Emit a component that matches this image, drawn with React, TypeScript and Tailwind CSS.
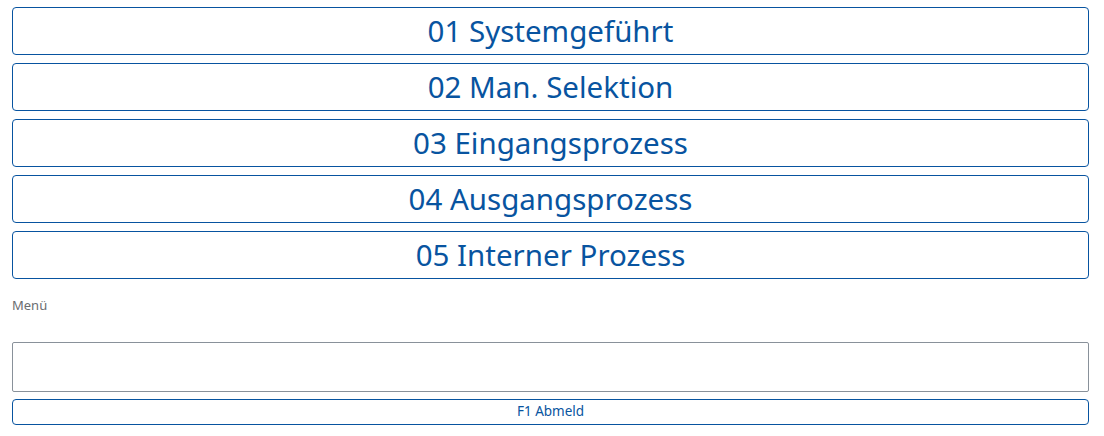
const items = [
  '01 Systemgeführt',
  '02 Man. Selektion',
  '03 Eingangsprozess',
  '04 Ausgangsprozess',
  '05 Interner Prozess',
];

export default function App() {
  return (
    <div className="min-h-[436px] bg-white pl-3 pr-[15px] pt-[7px] font-['Noto_Sans',sans-serif]">
      <div className="flex flex-col gap-2">
        {items.map((label) => (
          <button
            key={label}
            className="h-12 w-full rounded-[4px] border border-[#0854a0] bg-white text-[29.5px] leading-none text-[#0854a0]"
          >
            {label}
          </button>
        ))}
      </div>
      <div className="mt-[17px] h-[19px] text-[13px] leading-[19px] text-[#6a6d70]">Menü</div>
      <input
        className="mt-[27px] block h-[50px] w-full rounded-[2px] border border-[#89919a] bg-white px-2 text-sm outline-none"
      />
      <button className="mt-[7px] block h-[26px] w-full rounded-[4px] border border-[#0854a0] bg-white text-[13.5px] leading-none text-[#0854a0]">
        F1 Abmeld
      </button>
    </div>
  );
}
